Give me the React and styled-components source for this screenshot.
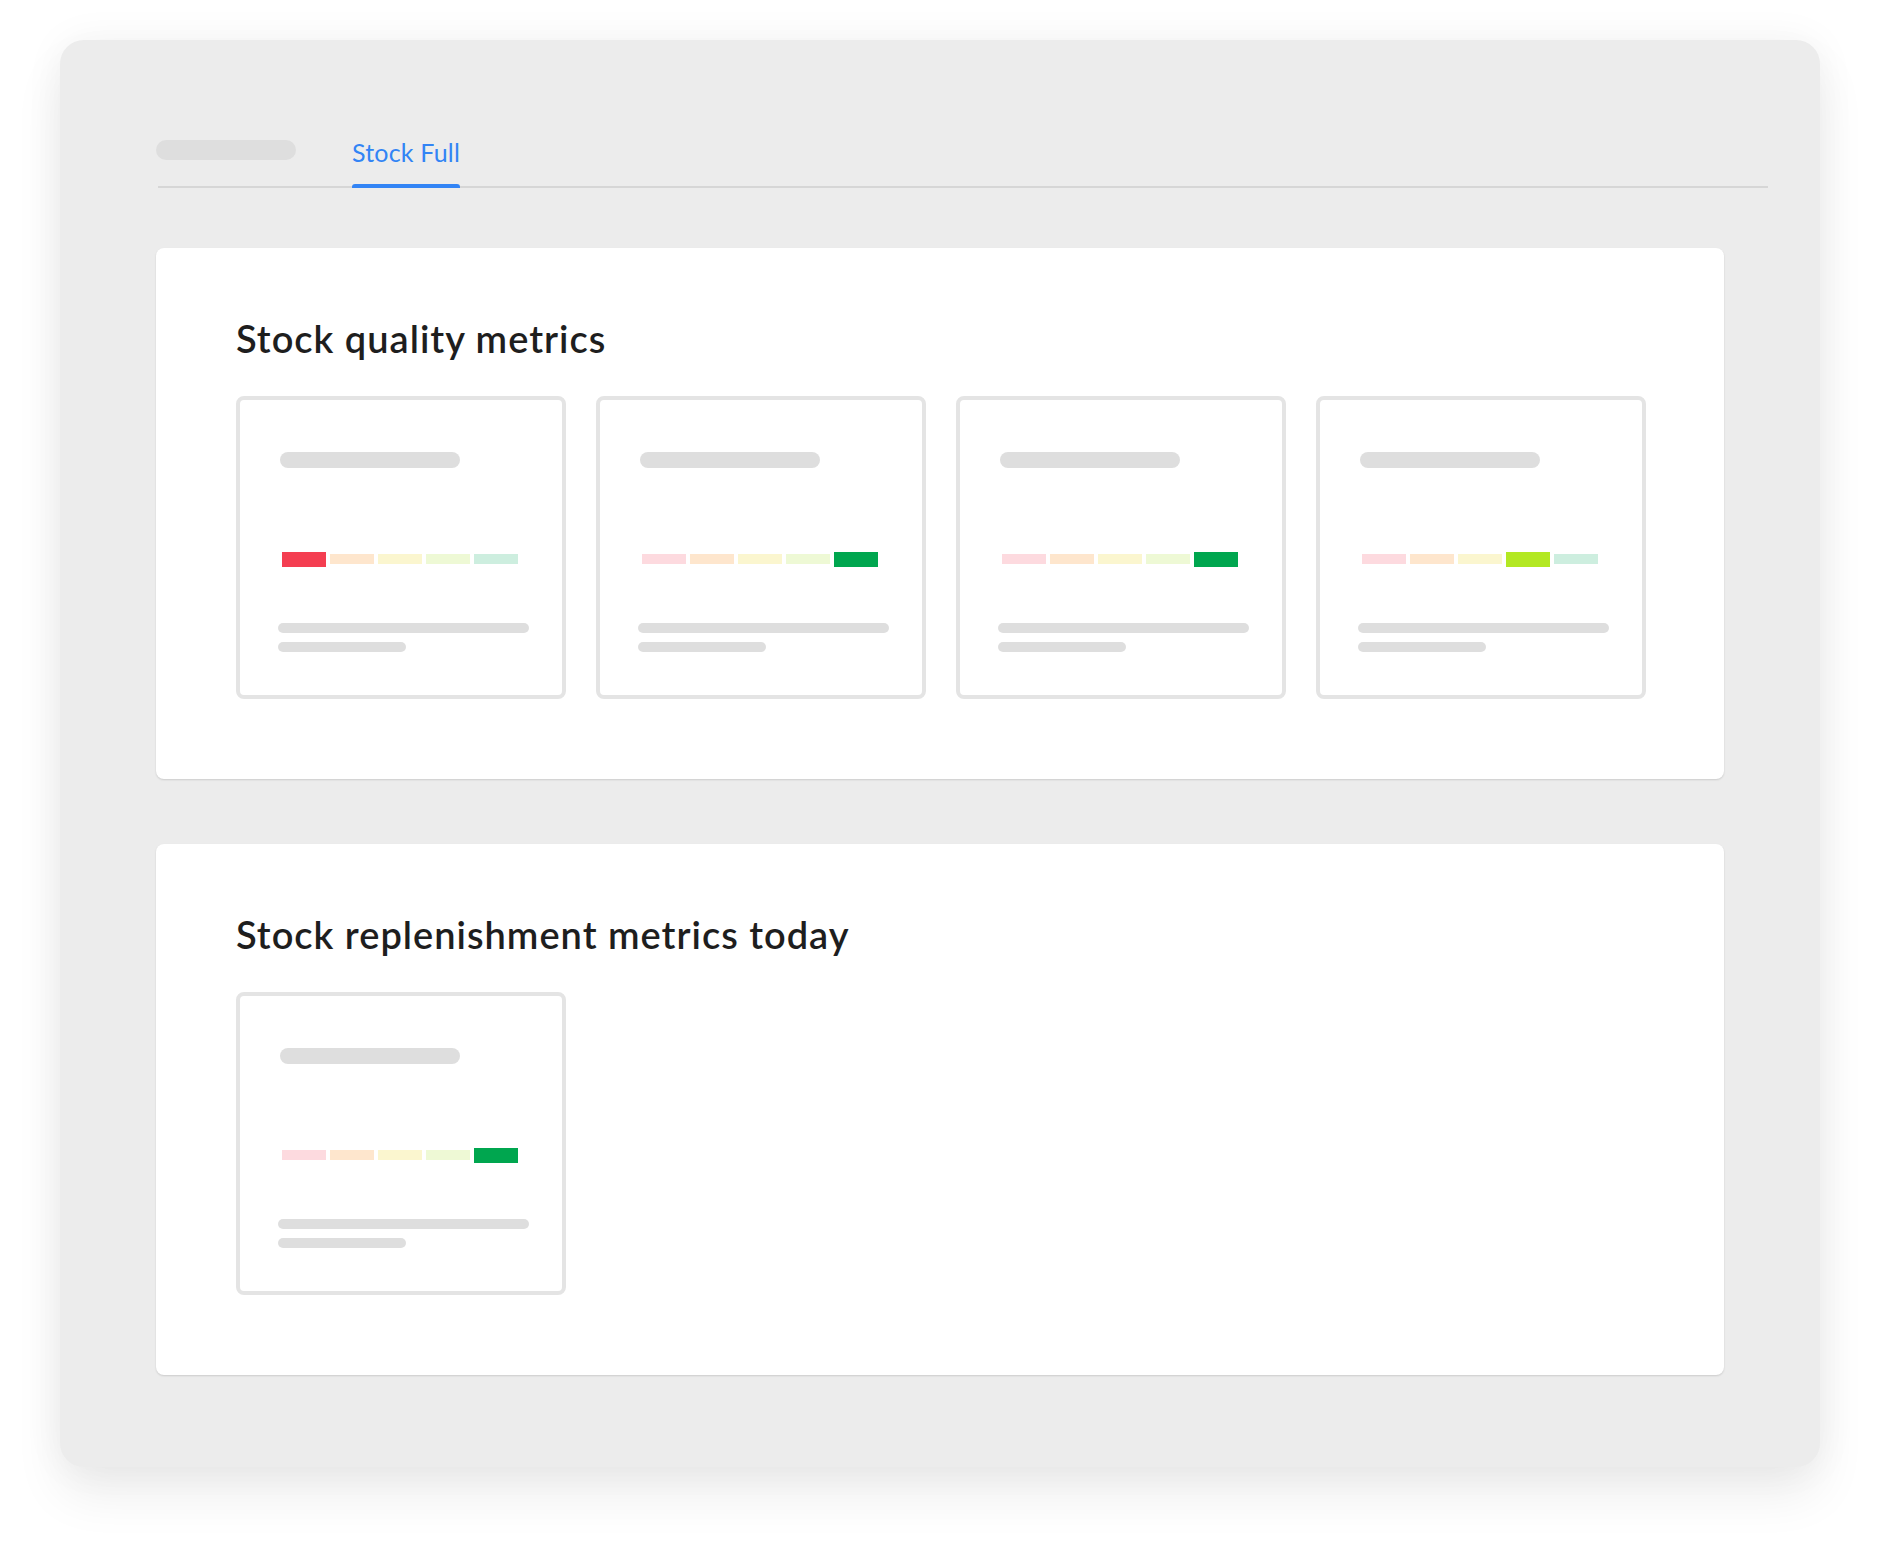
import React from "react";
import styled, { createGlobalStyle } from "styled-components";

const GlobalStyle = createGlobalStyle`
  html, body {
    margin: 0;
    padding: 0;
    background: #ffffff;
    font-family: Lato, "Liberation Sans", sans-serif;
  }
`;

const PALE = ["#fddadf", "#fee6cd", "#fbf6cf", "#eef9d5", "#cdeedf"];

const cards = {
  quality: [
    { active: 0, color: "#f43e51" },
    { active: 4, color: "#00a64f" },
    { active: 4, color: "#00a64f" },
    { active: 3, color: "#b3e823" },
  ],
  replenishment: [{ active: 4, color: "#00a64f" }],
};

const MetricCard = ({ active, color }) => {
  return (
    <Card>
      <Skeleton $w={180} $h={16} />
      <BarRow>
        {PALE.map((pale, i) => (
          <Bar key={i} $active={i === active} $color={i === active ? color : pale} />
        ))}
      </BarRow>
      <Lines>
        <Skeleton $w={251} $h={10} />
        <Skeleton $w={128} $h={10} />
      </Lines>
    </Card>
  );
};

const App = () => {
  return (
    <>
      <GlobalStyle />
      <Page>
        <Panel>
          <TabBar>
            <TabItem>
              <Skeleton $w={140} $h={20} />
            </TabItem>
            <TabItem $active>Stock Full</TabItem>
          </TabBar>

          <Section>
            <Title>Stock quality metrics</Title>
            <CardGrid>
              {cards.quality.map((c, i) => (
                <MetricCard key={i} {...c} />
              ))}
            </CardGrid>
          </Section>

          <Section>
            <Title>Stock replenishment metrics today</Title>
            <CardGrid>
              {cards.replenishment.map((c, i) => (
                <MetricCard key={i} {...c} />
              ))}
            </CardGrid>
          </Section>
        </Panel>
      </Page>
    </>
  );
};

const Page = styled.div`
  padding: 40px 60px 79px;
`;

const Panel = styled.div`
  background: #ececec;
  border-radius: 24px;
  padding: 100px 96px 92px;
  display: flex;
  flex-direction: column;
  gap: 65px;
  box-shadow: 0 28px 50px rgba(0, 0, 0, 0.07), 0 0 40px rgba(0, 0, 0, 0.05);
`;

const TabBar = styled.div`
  display: flex;
  align-items: flex-start;
  gap: 56px;
  height: 46px;
  margin: 0 -44px -5px 2px;
  border-bottom: 2px solid #d6d6d6;
`;

const TabItem = styled.div`
  position: relative;
  height: 46px;
  font-size: 25px;
  line-height: 24px;
  letter-spacing: 0.2px;
  color: #3284f5;
  margin-left: ${(p) => (p.$active ? "0" : "-2px")};

  &::after {
    content: "";
    display: ${(p) => (p.$active ? "block" : "none")};
    position: absolute;
    left: 0;
    right: 0;
    bottom: -2px;
    height: 4px;
    border-radius: 3px 3px 0 0;
    background: #3284f5;
  }
`;

const Section = styled.section`
  background: #ffffff;
  border-radius: 8px;
  padding: 68px 77px 80px 80px;
  box-shadow: 0 1px 2px rgba(0, 0, 0, 0.14);
`;

const Title = styled.h2`
  margin: 0 0 36px;
  font-size: 38px;
  line-height: 44px;
  font-weight: 600;
  letter-spacing: 1px;
  color: #1e1e1e;
`;

const CardGrid = styled.div`
  display: grid;
  grid-template-columns: repeat(4, 330px);
  column-gap: 30px;
`;

const Card = styled.div`
  box-sizing: border-box;
  height: 303px;
  border: 4px solid #e4e4e4;
  border-radius: 8px;
  padding: 52px 0 0 40px;
  display: flex;
  flex-direction: column;
  align-items: flex-start;
`;

const Skeleton = styled.div`
  width: ${(p) => p.$w}px;
  height: ${(p) => p.$h}px;
  border-radius: ${(p) => p.$h / 2}px;
  background: #dedede;
`;

const BarRow = styled.div`
  display: flex;
  align-items: center;
  gap: 4px;
  height: 16px;
  margin: 83px 0 0 2px;
`;

const Bar = styled.div`
  width: 44px;
  height: ${(p) => (p.$active ? 15 : 10)}px;
  background: ${(p) => p.$color};
`;

const Lines = styled.div`
  display: flex;
  flex-direction: column;
  gap: 9px;
  margin: 56px 0 0 -2px;
`;

export default App;
